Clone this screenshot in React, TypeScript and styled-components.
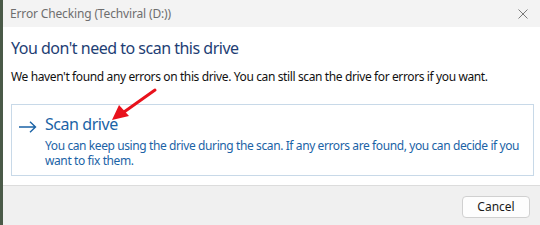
import React from "react";
import styled, { createGlobalStyle } from "styled-components";

const Global = createGlobalStyle`
  html, body { margin: 0; padding: 0; }
  body { width: 540px; height: 225px; overflow: hidden; background: #4a5a48; font-family: "Noto Sans", "Open Sans", sans-serif; }
`;

const Frame = styled.div`
  position: relative;
  margin-left: 3px;
  width: 537px;
  height: 225px;
  display: flex;
  flex-direction: column;
  background: #ffffff;
`;

const TitleBar = styled.div`
  height: 27px;
  flex: none;
  background: #f3f3f3;
  display: flex;
  align-items: center;
  justify-content: space-between;
  padding: 0 12px 0 7px;
`;

const TitleText = styled.span`
  font-size: 12px;
  letter-spacing: -0.15px;
  color: #6e6e6e;
`;

const Content = styled.div`
  flex: 1;
  display: flex;
  flex-direction: column;
  padding: 9px 6px 0 8px;
`;

const Heading = styled.div`
  font-size: 16px;
  letter-spacing: -0.5px;
  color: #1e3e74;
  line-height: 24px;
`;

const Body = styled.div`
  font-size: 12px;
  letter-spacing: -0.38px;
  color: #111;
  margin-top: 9px;
  line-height: 16px;
`;

const OptionBox = styled.div`
  margin-top: 19px;
  border: 1px solid #c8d9e8;
  height: 72px;
  display: flex;
  gap: 8px;
  padding: 8px 2px 0 7px;
  box-sizing: border-box;
`;

const ArrowIcon = styled.svg`
  flex: none;
  margin-top: 8px;
`;

const OptionText = styled.div`
  display: flex;
  flex-direction: column;
`;

const OptionTitle = styled.div`
  font-size: 16px;
  letter-spacing: -0.45px;
  color: #1b63a6;
  line-height: 22px;
  margin-bottom: 3px;
`;

const OptionDesc = styled.div`
  font-size: 12px;
  letter-spacing: -0.4px;
  color: #1b63a6;
  line-height: 15px;
`;

const Footer = styled.div`
  height: 40px;
  flex: none;
  background: #f0f0f0;
  border-top: 1px solid #dcdcdc;
  display: flex;
  justify-content: flex-end;
  align-items: center;
  padding: 2px 10px 0 0;
  box-sizing: border-box;
`;

const Button = styled.button`
  width: 68px;
  height: 22px;
  background: #fdfdfd;
  border: 1px solid #d0d0d0;
  border-radius: 4px;
  font-family: inherit;
  font-size: 12px;
  color: #1a1a1a;
  padding: 0;
`;

const Annotation = styled.svg`
  position: absolute;
  left: 0;
  top: 0;
  pointer-events: none;
`;

export default function App() {
  return (
    <>
      <Global />
      <Frame>
        <TitleBar>
          <TitleText>Error Checking (Techviral (D:))</TitleText>
          <svg width="10" height="10" viewBox="0 0 10 10">
            <path d="M0.5 0.5 L9.5 9.5 M9.5 0.5 L0.5 9.5" stroke="#7a7a7a" strokeWidth="1" />
          </svg>
        </TitleBar>
        <Content>
          <Heading>You don't need to scan this drive</Heading>
          <Body>We haven't found any errors on this drive. You can still scan the drive for errors if you want.</Body>
          <OptionBox>
            <ArrowIcon width="18" height="12" viewBox="0 0 18 12">
              <path d="M0 6 H16.5 M11 0.8 L16.5 6 L11 11.2" stroke="#1b63a6" strokeWidth="1.4" fill="none" />
            </ArrowIcon>
            <OptionText>
              <OptionTitle>Scan drive</OptionTitle>
              <OptionDesc>
                You can keep using the drive during the scan. If any errors are found, you can decide if you want to fix them.
              </OptionDesc>
            </OptionText>
          </OptionBox>
        </Content>
        <Footer>
          <Button>Cancel</Button>
        </Footer>
        <Annotation width="537" height="225" viewBox="0 0 537 225">
          <path d="M152 90 L121 112" stroke="#e8121c" strokeWidth="3" strokeLinecap="round" />
          <path d="M109 120 L116 105 L126 116 Z" fill="#e8121c" />
        </Annotation>
      </Frame>
    </>
  );
}
